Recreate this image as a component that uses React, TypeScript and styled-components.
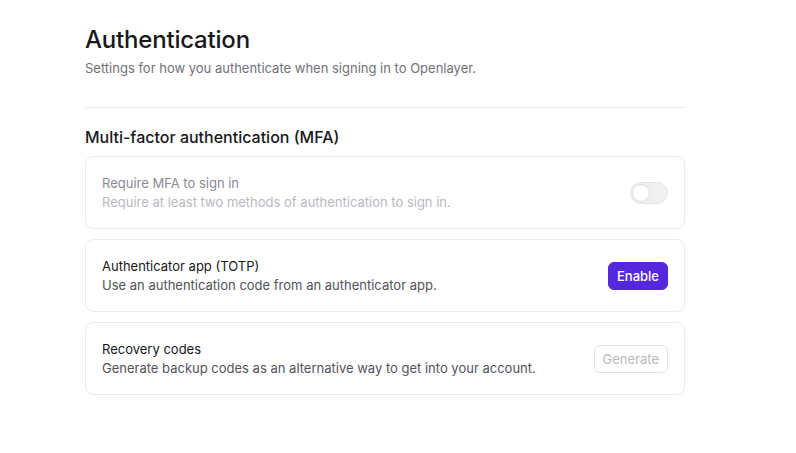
import styled, {createGlobalStyle} from "styled-components";

const Global = createGlobalStyle`
body {
  margin: 0;
  background: #ffffff;
  font-family: Inter, 'Noto Sans', sans-serif;
  color: #18181b;
}
`

const Page = styled.div`
width: 600px;
padding: 25px 0 0 85px;
display: flex;
flex-direction: column;
`

const Title = styled.h1`
margin: 0;
font-size: 24px;
font-weight: 500;
line-height: 30px;
letter-spacing: -0.2px;
color: #18181b;
`

const Subtitle = styled.p`
margin: 3px 0 0;
font-size: 13px;
line-height: 20px;
color: #71717a;
`

const Divider = styled.hr`
border: none;
border-top: 1px solid #ececef;
margin: 29px 0 17px;
`

const SectionTitle = styled.h2`
margin: 0 0 7px;
font-size: 16px;
font-weight: 500;
line-height: 24px;
color: #18181b;
`

const List = styled.div`
display: flex;
flex-direction: column;
gap: 10px;
`

const Card = styled.div`
box-sizing: border-box;
height: 73px;
border: 1px solid #ececef;
border-radius: 8px;
padding: 0 16px;
display: flex;
align-items: center;
justify-content: space-between;
`

const Texts = styled.div`
display: flex;
flex-direction: column;
`

const CardTitle = styled.div<{ $muted?: boolean }>`
font-size: 13px;
line-height: 19px;
font-weight: 400;
color: ${p => p.$muted ? '#8a8a93' : '#18181b'};
`

const CardText = styled.div<{ $muted?: boolean }>`
font-size: 13px;
line-height: 19px;
color: ${p => p.$muted ? '#b9b9c1' : '#52525b'};
`

const Toggle = styled.div`
box-sizing: border-box;
width: 38px;
height: 22px;
border-radius: 11px;
background: #f0f0f2;
border: 1px solid #e4e4e7;
padding: 1px;
display: flex;
align-items: center;
`

const Knob = styled.div`
box-sizing: border-box;
width: 18px;
height: 18px;
border-radius: 50%;
background: #ffffff;
border: 1px solid #dedee2;
`

const Button = styled.button<{ $primary?: boolean }>`
box-sizing: border-box;
height: 28px;
padding: 0 8px;
border-radius: 6px;
font-family: Inter, 'Noto Sans', sans-serif;
font-size: 13px;
font-weight: ${p => p.$primary ? 500 : 400};
border: 1px solid ${p => p.$primary ? '#5628dd' : '#e4e4e7'};
background: ${p => p.$primary ? '#5628dd' : '#ffffff'};
color: ${p => p.$primary ? '#ffffff' : '#b9b9c1'};
cursor: pointer;
`

const App = () => {
    return (
        <Page>
            <Global/>
            <Title>Authentication</Title>
            <Subtitle>Settings for how you authenticate when signing in to Openlayer.</Subtitle>
            <Divider/>
            <SectionTitle>Multi-factor authentication (MFA)</SectionTitle>
            <List>
                <Card>
                    <Texts>
                        <CardTitle $muted>Require MFA to sign in</CardTitle>
                        <CardText $muted>Require at least two methods of authentication to sign in.</CardText>
                    </Texts>
                    <Toggle><Knob/></Toggle>
                </Card>
                <Card>
                    <Texts>
                        <CardTitle>Authenticator app (TOTP)</CardTitle>
                        <CardText>Use an authentication code from an authenticator app.</CardText>
                    </Texts>
                    <Button $primary>Enable</Button>
                </Card>
                <Card>
                    <Texts>
                        <CardTitle>Recovery codes</CardTitle>
                        <CardText>Generate backup codes as an alternative way to get into your account.</CardText>
                    </Texts>
                    <Button disabled>Generate</Button>
                </Card>
            </List>
        </Page>
    )
}

export default App;
